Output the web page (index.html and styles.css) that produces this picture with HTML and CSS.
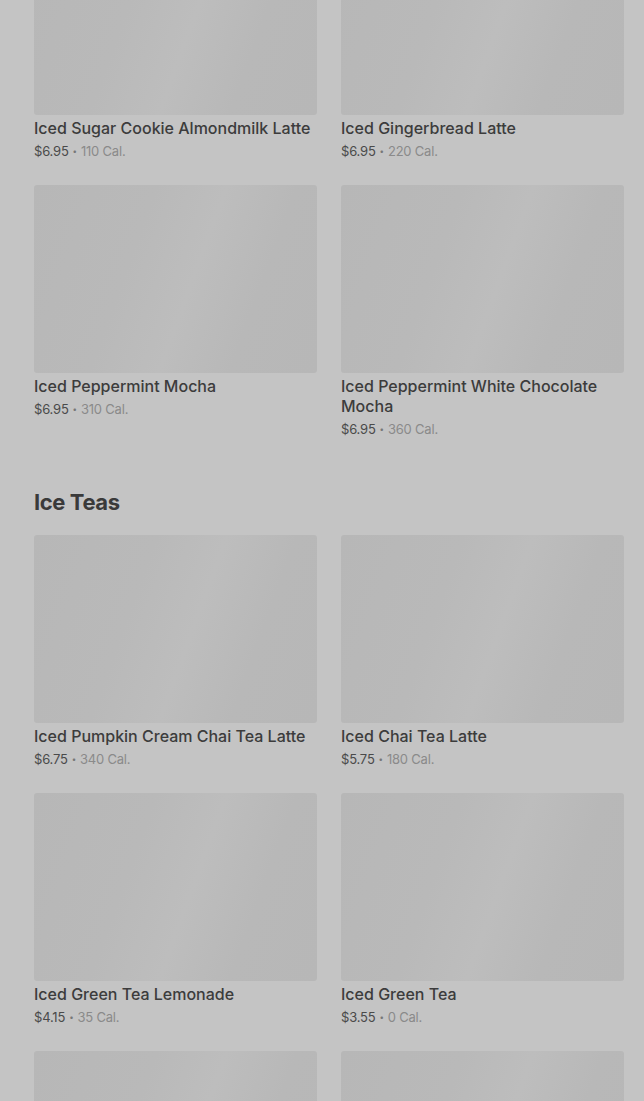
FILE: index.html
```html
<!DOCTYPE html>
<html>
<head>
<meta charset="utf-8">
<link rel="stylesheet" href="styles.css">
</head>
<body>
<main class="page">
  <section class="section section-first">
    <div class="grid">
      <div class="item"><div class="thumb"></div><div class="name">Iced Sugar Cookie Almondmilk Latte</div><div class="meta"><span class="price">$6.95</span><span class="dot">•</span><span class="cal">110 Cal.</span></div></div>
      <div class="item"><div class="thumb"></div><div class="name">Iced Gingerbread Latte</div><div class="meta"><span class="price">$6.95</span><span class="dot">•</span><span class="cal">220 Cal.</span></div></div>
      <div class="item"><div class="thumb"></div><div class="name">Iced Peppermint Mocha</div><div class="meta"><span class="price">$6.95</span><span class="dot">•</span><span class="cal">310 Cal.</span></div></div>
      <div class="item"><div class="thumb"></div><div class="name">Iced Peppermint White Chocolate Mocha</div><div class="meta"><span class="price">$6.95</span><span class="dot">•</span><span class="cal">360 Cal.</span></div></div>
    </div>
  </section>
  <section class="section">
    <h2 class="section-title">Ice Teas</h2>
    <div class="grid">
      <div class="item"><div class="thumb"></div><div class="name">Iced Pumpkin Cream Chai Tea Latte</div><div class="meta"><span class="price">$6.75</span><span class="dot">•</span><span class="cal">340 Cal.</span></div></div>
      <div class="item"><div class="thumb"></div><div class="name">Iced Chai Tea Latte</div><div class="meta"><span class="price">$5.75</span><span class="dot">•</span><span class="cal">180 Cal.</span></div></div>
      <div class="item"><div class="thumb"></div><div class="name">Iced Green Tea Lemonade</div><div class="meta"><span class="price">$4.15</span><span class="dot">•</span><span class="cal">35 Cal.</span></div></div>
      <div class="item"><div class="thumb"></div><div class="name">Iced Green Tea</div><div class="meta"><span class="price">$3.55</span><span class="dot">•</span><span class="cal">0 Cal.</span></div></div>
      <div class="item"><div class="thumb"></div></div>
      <div class="item"><div class="thumb"></div></div>
    </div>
  </section>
</main>
</body>
</html>
```

FILE: styles.css
```css
html, body {
  margin: 0;
  padding: 0;
  background: #c4c4c4;
  overflow: hidden;
}
body {
  font-family: Inter, "Liberation Sans", sans-serif;
  color: #3d3d3d;
}
.page {
  padding: 0 20px 0 34px;
  margin-top: -73px;
}
.section-first {
  margin-bottom: 50px;
}
.section-title {
  margin: 0 0 19px;
  font-size: 22px;
  line-height: 28px;
  font-weight: 700;
  color: #3a3a3a;
  letter-spacing: -0.4px;
}
.grid {
  display: grid;
  grid-template-columns: 1fr 1fr;
  column-gap: 24px;
  row-gap: 25px;
}
.thumb {
  height: 188px;
  border-radius: 3px;
  background: linear-gradient(110deg, #b7b7b7 0%, #b9b9b9 35%, #bdbdbd 55%, #b8b8b8 75%, #b7b7b7 100%);
}
.name {
  margin-top: 3px;
  font-size: 16px;
  line-height: 20px;
  font-weight: 500;
  color: #3c3c3c;
}
.meta {
  margin-top: 4px;
  font-size: 13px;
  line-height: 18px;
  color: #8a8a8a;
  letter-spacing: -0.2px;
}
.price {
  color: #4a4a4a;
}
.dot {
  font-size: 8px;
  margin: 0 4px;
  vertical-align: 2px;
  color: #777;
}
.cal {
  color: #8a8a8a;
}
```
